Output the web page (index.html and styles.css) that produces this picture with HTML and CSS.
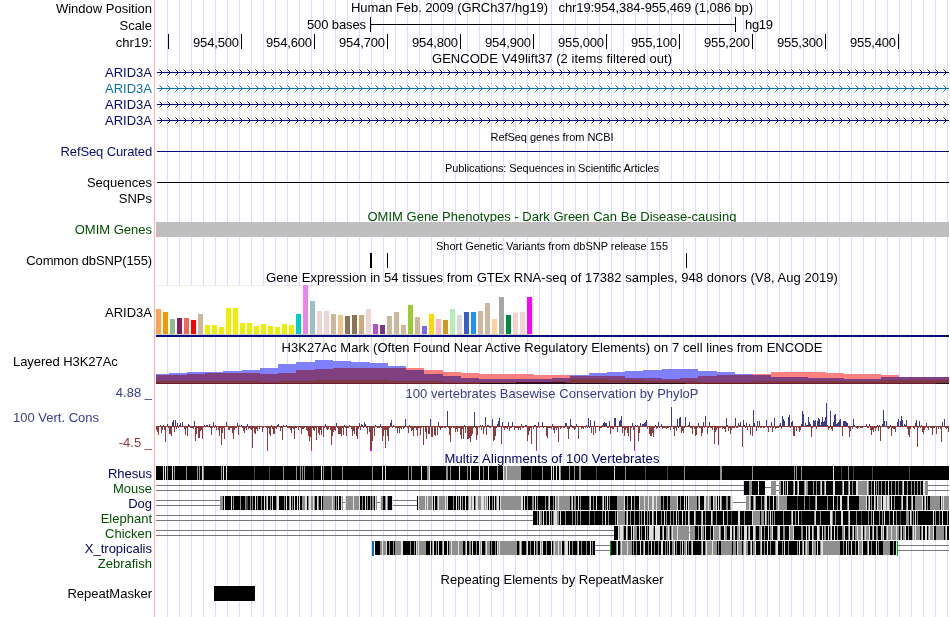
FILE: index.html
```
<!DOCTYPE html>
<html lang="en">
<head>
<meta charset="utf-8">
<title>Genome Browser hg19 chr19:954,384-955,469</title>
<link rel="stylesheet" href="styles.css">
</head>
<body>
<main class="browser">
  <div class="row h16"><div class="label low">Window Position</div><div class="title pre"><span style="--w:402">Human Feb. 2009 (GRCh37/hg19)   chr19:954,384-955,469 (1,086 bp)</span></div></div>
  <div class="row h17"><div class="label low">Scale</div><svg class="track" id="scale" viewBox="155 0 795 17"></svg></div>
  <div class="row h17"><div class="label low">chr19:</div><svg class="track" id="ruler" viewBox="155 0 795 17"></svg></div>
  <div class="row h14"><div class="label"></div><div class="title down"><span style="--w:240">GENCODE V49lift37 (2 items filtered out)</span></div></div>
  <div class="row h16 navy"><div class="label low">ARID3A</div><svg class="track gene" viewBox="155 0 795 16"></svg></div>
  <div class="row h16 sky"><div class="label low">ARID3A</div><svg class="track gene" viewBox="155 0 795 16"></svg></div>
  <div class="row h16 navy"><div class="label low">ARID3A</div><svg class="track gene" viewBox="155 0 795 16"></svg></div>
  <div class="row h16 navy"><div class="label low">ARID3A</div><svg class="track gene" viewBox="155 0 795 16"></svg></div>
  <div class="row h16"><div class="label"></div><div class="title small down"><span style="--w:123">RefSeq genes from NCBI</span></div></div>
  <div class="row h15 navy"><div class="label tight">RefSeq Curated</div><svg class="track" viewBox="155 0 795 15"><path class="solid" d="M157 7h792v1h-792z"/></svg></div>
  <div class="row h16"><div class="label"></div><div class="title small down"><span style="--w:214">Publications: Sequences in Scientific Articles</span></div></div>
  <div class="row h15"><div class="label">Sequences</div><svg class="track" viewBox="155 0 795 15"><path class="solid" d="M157 7h792v1h-792z"/></svg></div>
  <div class="row h16"><div class="label low">SNPs</div></div>
  <div class="row h16 green"><div class="label"></div><div class="title lower"><span style="--w:369">OMIM Gene Phenotypes - Dark Green Can Be Disease-causing</span></div></div>
  <div class="row h15 green"><div class="label">OMIM Genes</div><svg class="track" viewBox="155 0 795 15"><path class="omim" d="M156 0h793v15h-793z"/></svg></div>
  <div class="row h16"><div class="label"></div><div class="title small down"><span style="--w:232">Short Genetic Variants from dbSNP release 155</span></div></div>
  <div class="row h15"><div class="label tight">Common dbSNP(155)</div><svg class="track" viewBox="155 0 795 15"><path class="solid" d="M370 0h2v15h-2zM387 0h1v15h-1zM686 0h1v15h-1z"/></svg></div>
  <div class="row h17"><div class="label"></div><div class="title down"><span style="--w:572">Gene Expression in 54 tissues from GTEx RNA-seq of 17382 samples, 948 donors (V8, Aug 2019)</span></div></div>
  <div class="row h53"><div class="label low">ARID3A</div><svg class="track" id="gtex" viewBox="155 0 795 53"></svg></div>
  <div class="row h17"><div class="label"></div><div class="title down"><span style="--w:541">H3K27Ac Mark (Often Found Near Active Regulatory Elements) on 7 cell lines from ENCODE</span></div></div>
  <div class="row h30"><div class="label wide">Layered H3K27Ac</div><svg class="track" id="h3k" viewBox="155 355 795 30"></svg></div>
  <div class="row h16 indigo"><div class="label">4.88 _</div><div class="title down"><span style="--w:293">100 vertebrates Basewise Conservation by PhyloP</span></div></div>
  <div class="row h51"><div class="label stack"><span class="indigo first">100 Vert. Cons</span><span class="maroon">-4.5 _</span></div><svg class="track" id="phylop" viewBox="155 401 795 51"></svg></div>
  <div class="row h14 deep"><div class="label"></div><div class="title"><span style="--w:215">Multiz Alignments of 100 Vertebrates</span></div></div>
  <div class="row h15 deep"><div class="label">Rhesus</div><svg class="track align" data-name="rhesus" viewBox="155 0 795 15"></svg></div>
  <div class="row h15 green"><div class="label">Mouse</div><svg class="track align" data-name="mouse" viewBox="155 0 795 15"></svg></div>
  <div class="row h15 deep"><div class="label">Dog</div><svg class="track align" data-name="dog" viewBox="155 0 795 15"></svg></div>
  <div class="row h15 green"><div class="label">Elephant</div><svg class="track align" data-name="elephant" viewBox="155 0 795 15"></svg></div>
  <div class="row h15 green"><div class="label">Chicken</div><svg class="track align" data-name="chicken" viewBox="155 0 795 15"></svg></div>
  <div class="row h15 deep"><div class="label">X_tropicalis</div><svg class="track align" data-name="frog" viewBox="155 0 795 15"></svg></div>
  <div class="row h15 green"><div class="label">Zebrafish</div></div>
  <div class="row h15"><div class="label"></div><div class="title down"><span style="--w:223">Repeating Elements by RepeatMasker</span></div></div>
  <div class="row h15"><div class="label">RepeatMasker</div><svg class="track" viewBox="155 0 795 15"><path class="solid" d="M214 0h41v15h-41z"/></svg></div>
</main>
<script src="tracks.js"></script>
</body>
</html>
```
FILE: styles.css
```
* { box-sizing: border-box; }
body { margin: 0; background: #fff; }
.browser {
  width: 950px; height: 617px; overflow: hidden;
  font: 13px/14px "Liberation Sans", Arial, sans-serif; color: #000;
  background:
    linear-gradient(#ffb4b4, #ffb4b4) 154px 0 / 1px 100% no-repeat,
    repeating-linear-gradient(90deg, #dcdcff 0 1px, transparent 1px 12px) 167px 0 / 783px 100% no-repeat;
}
.row { display: grid; grid-template-columns: 152px 795px; column-gap: 3px; }
.h14 { height: 14px; } .h15 { height: 15px; } .h16 { height: 16px; } .h17 { height: 17px; }
.h30 { height: 30px; } .h51 { height: 51px; } .h53 { height: 53px; }
.label { display: flex; align-items: center; justify-content: flex-end; white-space: nowrap; }
.low { padding-top: 2px; }
.tight { letter-spacing: -.13px; }
.wide { justify-content: flex-start; align-items: flex-start; padding-left: 13px; letter-spacing: -.05px; }
.stack { flex-direction: column; align-items: flex-end; justify-content: space-between; padding: 10px 0 2px; }
.first { align-self: flex-start; padding-left: 13px; }
.title { display: flex; align-items: center; justify-content: center; white-space: nowrap; padding-right: 1px; }
.pre { white-space: pre; }
.down { padding-top: 2px; }
.lower { padding-top: 4px; }
.small { font-size: 11px; }
.track { display: block; width: 795px; height: 100%; shape-rendering: crispEdges; overflow: hidden; }
.track text { fill: #000; text-anchor: end; }
.navy { color: #0c0c78; }
.sky { color: #0f70b0; }
.green { color: #005000; }
.deep { color: #000064; }
.indigo { color: #3c3c8c; }
.maroon { color: #8c3c3c; }
.solid { fill: currentColor; }
.omim { fill: #bebebe; }
.arrows { fill: none; stroke: currentColor; stroke-width: 1; shape-rendering: auto; }
.marks { isolation: isolate; }
.marks path { mix-blend-mode: multiply; }
```
FILE: tracks.js
```
const rect = (x, y, w, h, c) => `<rect x="${x}" y="${y}" width="${w}" height="${h}" fill="${c}"/>`;
const byId = id => document.getElementById(id);

/* Fit each heading to its nominal width. */
document.querySelectorAll('.title span').forEach(s => {
  const want = +s.style.getPropertyValue('--w');
  s.style.letterSpacing = (want - s.getBoundingClientRect().width) / s.textContent.length + 'px';
});

byId('scale').innerHTML = rect(370, 1, 1, 15, '#000') + rect(735, 1, 1, 15, '#000') + rect(370, 8, 365, 1, '#000') +
  '<text x="366" y="13" textLength="59">500 bases</text><text x="773" y="13" textLength="28">hg19</text>';

const names = ['', '954,500', '954,600', '954,700', '954,800', '954,900', '955,000', '955,100', '955,200', '955,300', '955,400'];
byId('ruler').innerHTML = names.map((n, i) => {
  const x = 168 + i * 73;
  return rect(x, 1, 1, 15, '#000') + (n ? `<text x="${x - 2}" y="14" textLength="46">${n}</text>` : '');
}).join('');

document.querySelectorAll('.gene').forEach(g => {
  let d = '';
  for (let x = 162; x < 950; x += 8) d += `M${x - 2.5} 5.5l3 3l-3 3`;
  g.innerHTML = rect(157, 8, 792, 1, 'currentColor') + `<path class="arrows" d="${d}"/>`;
});

const tops = [87,96,117,114,114,120,102,135,135,141,84,84,129,129,138,132,138,141,132,135,102,15,63,93,93,102,105,108,105,105,87,132,135,108,96,135,75,111,138,102,117,120,87,105,96,96,93,69,117,51,105,99,96,51];
const tissue = ('ffa54f ee9a00 8fbc8f 8b1c62 ee6a50 ff0000 cdb79e ' + 'eeee00 '.repeat(13) +
  '00cdcd ee82ee 9ac0cd eed5d2 eed5d2 cdb79e eec591 8b7355 8b7355 cdaa7d eed5d2 b452cd 7a378b cdb79e cdb79e cdb79e 9acd32 cdb79e 7a67ee ffd700 ffb6c1 cd9b1d b4eeb4 d9d9d9 3a5fcd 1e90ff cdb79e cdb79e ffd39b a6a6a6 008b45 eed5d2 eed5d2 ff00ff').split(' ');
byId('gtex').innerHTML = rect(156, 0, 378, 50, '#eee') + rect(156, 1, 377, 48, '#fff') + rect(156, 49, 377, 1, '#ccc') +
  tops.map((t, i) => rect(156 + i * 7, t / 3 - 5, 5, (162 - t) / 3, '#' + tissue[i])).join('') +
  rect(156, 50, 793, 2, '#0c0c78');

const area = (steps, fill) => {
  let d = `M${steps[0]} 384`;
  for (let i = 0; i < steps.length; i += 2) d += `H${steps[i]}V${steps[i + 1]}`;
  return `<path fill="${fill}" d="${d}H949V384z"/>`;
};
byId('h3k').innerHTML = '<g class="marks">' +
  area([156,374,169,373,187,372,223,371,242,370,260,368,278,364,296,362,315,360,333,361,351,362,370,363,388,366,406,370,424,374,443,376,461,378,479,379,534,379,552,378,570,375,589,373,607,372,625,371,643,370,662,369,698,371,717,372,735,374,753,375,771,377,808,378,844,379,881,377], '#8080ff') +
  area([156,375,187,374,205,373,260,374,278,373,296,370,315,369,333,368,424,370,443,372,461,373,479,374,534,375,570,376,625,378,662,379,680,378,698,376,717,375,753,374,771,372,826,373,844,374,881,375,899,377], '#ff8080') + '</g>' +
  area([156,381,260,382,278,381,315,380,388,381,443,382,552,381,570,379,607,380,643,381,698,382,753,381,881,380], '#803840') +
  rect(156, 383, 793, 1, '#701c30') + rect(480, 383, 205, 1, '#280818') + rect(936, 383, 13, 1, '#281818') + rect(516, 382, 50, 1, '#401028');

/* Conservation scores: a position and a score (a bar's signed height), per base column. */
const peaks = {};
const put = (origin, s) => s.trim().split(/\s+/).forEach(p => {
  const [x, y] = p.split(',').map(Number);
  peaks[origin + Math.floor(x / 3)] = Math.round((124 - y) / 3);
});
put(150, '19,135 22,141 25,150 31,120 34,144 43,135 46,171 52,117 55,129 58,147 61,147 64,153 67,111 70,105 73,141 76,105 82,114 88,120 91,114 97,111 103,132 106,150 112,153 115,117 127,129 133,108 136,168 139,147 145,159 148,159 151,138 157,162 163,120 178,117 184,150 190,111 199,135 205,135 208,153 214,180 217,144 223,162 229,111 235,135 238,135 241,129 247,144 250,162 262,114 265,150 280,138 283,144 292,117 307,189 313,144 316,147 322,138 328,132 337,141 352,193 358,147 361,153 370,147 373,147 382,120 385,117 391,138 397,165 409,120 424,144 433,162 445,135 454,147 472,138 475,153 478,168 481,156 484,193 493,138 499,165 505,144 508,150 514,150 520,156 526,117 529,132 535,132 544,180 547,153 550,141 556,138 559,114 565,147 568,147 571,147 574,153 580,150 583,120 589,153 598,120 604,132 607,153 610,138 613,147 619,153 622,162 628,114 634,117 637,120 643,111 646,117 652,147 658,141 661,193 664,193 667,168 673,153 691,117 697,168 700,153 706,189 712,153 715,168 721,114 724,105 730,120 742,144 748,144 754,132 766,102 775,144 778,120 784,138 790,153 802,153');
put(415, '7,153 16,150 25,180 31,141 34,162 40,147 43,147 46,102 49,156 52,156 58,150 61,153 67,150 70,111 76,135 97,78 103,150 106,171 121,141 127,141 136,150 139,162 145,162 151,144 157,162 160,162 163,159 166,171 169,153 172,147 178,81 184,165 187,150 205,147 211,96 214,150 232,102 235,168 238,165 241,153 247,117 250,108 253,99 259,177 262,111 268,135 280,111 283,138 292,111 310,135 319,117 322,129 337,168 340,150 343,138 349,177 355,132 364,193 370,111 382,111 394,153 397,159 412,117 418,144 430,171 436,132 451,114 454,114 460,162 466,102 478,135 484,117 490,162 505,132 520,99 526,105 529,144 535,150 538,108 541,144 553,138 565,114 568,111 571,114 574,114 583,108 586,147 598,99 601,99 607,141 613,108 616,105 619,93 622,144 628,153 637,144 640,153 646,168 652,114 658,193 670,168 673,144 676,114 682,117 685,117 688,114 691,111 694,105 703,147 706,153 709,153 712,144 715,156 724,132 730,111 739,117 742,132 754,132 769,66 778,153 784,138 787,102 793,99 802,138');
put(680, '1,96 4,144 10,144 16,96 28,111 37,147 43,132 46,153 49,150 55,114 64,153 67,144 70,111 76,93 82,147 88,111 97,135 103,177 106,141 115,180 136,141 139,99 145,138 151,147 166,99 175,114 181,111 187,186 190,105 199,114 208,117 211,150 217,153 220,75 223,114 229,138 232,108 238,108 259,105 265,141 274,111 277,141 283,99 301,114 307,93 310,102 313,108 325,96 328,90 334,111 337,108 340,153 343,153 349,138 358,141 364,117 367,78 370,87 376,114 385,96 388,111 391,117 394,156 400,105 403,108 406,105 409,132 412,108 415,99 418,102 424,111 427,96 430,111 433,108 436,96 439,54 445,135 451,78 457,138 460,111 463,90 466,87 469,117 472,114 475,111 478,105 481,102 487,153 490,108 493,108 496,108 499,111 502,114 508,156 511,138 517,132 520,102 532,132 541,129 559,117 568,117 571,135 574,150 580,141 586,138 595,138 601,168 607,117 610,75 613,108 619,108 628,129 634,153 646,141 652,111 655,102 661,108 664,93 667,105 673,117 679,105 685,150 688,156 703,132 706,114 709,105 712,186 718,108 727,141 730,147 739,114 754,129 757,150 769,147 775,132 784,171 787,111 793,102 799,132 805,141');
let cons = '';
for (let x = 156; x < 949; x++) {
  const n = (x * 37 + (x * x) % 29) % 11;
  const v = peaks[x] ?? (n < 4 ? -1 : n < 7 ? -2 - n % 3 : n === 8 ? 1 : 0);
  cons += rect(x, 426, 1, 1, '#8c3c3c');
  if (v > 0) cons += rect(x, 426 - v, 1, v, '#3c3c8c');
  if (v < 0) cons += rect(x, 427, 1, -v - 0.5 | 0 || 1, '#8c3c3c');
  if (v <= -23) cons += rect(x, 449, 1, 2, '#f0f');
}
byId('phylop').innerHTML = cons;

/* Alignment quality: block starts, then runs of tone + length (k dark, d charcoal, g grey, l light, w open).
   In a cycling track a run list repeats up to the next start. */
const tone = { k: '#000', d: '#444', g: '#8f8f8f', l: '#e0e0e0', w: '#fff' };
const align = {
  rhesus: { once: true, blocks: [[156, 949]], runs: '163 l1k1l1k1g1 172 l1k1g1 186 g1 197 g1k1g1k2l1g1 221 g1k1l1k2l1 254 d1 269 d1 283 g1 296 g1k3g1k1g1k1g1 313 d1 321 l1k1g1 331 g1 342 g1 372 g1 382 l1k2l1 408 g1k2g1 421 l1k5g2l1 446 g2k2g1 459 l1 467 g1k2l1 479 l1k3g1k4l1k8g1 503 l1g2l1g14 531 d1 542 g1 551 l1k1l1k2l1k2l1g1 569 g1k4g1k4g2 596 d1 614 l1 625 g1 645 d1 667 d1 684 g1 720 g2 752 g1 794 g1k1g1k4g1 833 l1 841 d1 848 g1k4d1 872 d1 909 d1' },
  mouse: { double: [[156, 744], [776, 779], [928, 949]], single: [[765, 771]], blocks: [[744, 765], [771, 776], [779, 928]], runs: '744 k5g3k6l1k6 771 g5 779 g2k2l1k1g1k1l1k5g1l1k2g1l1k5g1l1 810 k3g1k2g1k3g1l1k2g1l1k7l2k7g1l1k4g1l1k2g1k3l2k8g1l1g1 856 l2g9l1g1k2g1k2l1k1g1k1g1k2g1k3g1k2l1k2g1k3g1k2g1k3g1l1k3g1k3g1k2g1k2g1k2g1k2' },
  dog: { double: [[156, 220], [393, 417]], single: [[343, 345], [377, 380], [733, 746]], blocks: [[220, 343], [344, 377], [380, 393], [417, 733], [746, 949]], runs: '220 g3k1l1k6l1k1g1k6g1k4g1d2k2g1k1g1k2l1k1g1k3g1k2l1k1g1l1k2g1k1l1k3g1l2k5g1k1l1k2g1l1k1g1k1l1k2l1k1l1k2g1k1l1k2l1k1 302 g3l2k1g1l2g2l1g1k2l1g1k2l1k1g9l1g2k1g1k1l1k2l1g1l1g2 344 w1l1g7l1g5l1k2g1k2l1k1g1k2g1k1g2k1l1g2l2 380 l1g2k2g1l1g1k4 417 k1l1g6l1g1l1g4l1k1l1k2g1l1g6l1g1l1k5g1k2l1k1g1k1l1k1g1k2l1k2g1l2g1l2k1g1l2g3l3g1l1g1l1k1l1k2g1k1l1k1g1l2 506 g15l2k1l1k2g1k4 533 g1k1l1k1g1k7g1k2g1l1k3g1k1l1g2l1g11k1g1l1k1g2k2l1k1g1k8g1l1k2g1k2l1k5g1l1k1 617 g7l1k2g1k3l1k2g1k4l1g4l1g3l1g3l2g2l1g4k2g1k3g1k2 684 l1k1l1k1l1g8k1g1l1k4l2g2l1g2k2l1g2l1k1l1k1l1g1k4g2k2g1l2 746 g3l1g1k2g1l1g1k5g1k2g1l2k2g1k3l1k2g2l1g5 787 k10d1k6g1k4d1k5g1l1k10g1k5l1k3g1k2l2k5g1l1k4 859 g7l1k1g1l1k1g1k2l1g1k1l1g3l1k1l3g1l2g1k1l1k2g1k6g1l1k3g1l1k3g1l1k2 930 g10k1l1g1l1g5' },
  elephant: { double: [[156, 533]], blocks: [[533, 949]], runs: '533 k4g1k1l1g2k1l1k2g1k2l1k1g1k1g1l3g2k1l1k4g1k6g1k2g1k1g1k2g1k8g1k4d1k7g1k2l1k2g1k2 618 g7k1g1l1k2g1k3g1k4g1k1g1k2l1k2g1k1g1k2l1g1k2l1k4g1k2l1k1g1k3g1k2g1k2l1k1g1k3l1k2g1k2l1g1k4l1g1k5g1l1k2g1k5l1g1k3g1k6l1k3g1k3d1k6l2k4g1k7l1 761 g3k1l1g1k1g1k1l1k1g1k1g1k8g1k7g1l1k2g1k2l1k2d1k12g1l1k4g1k9l2g1k2g1k5l2k5g1l1k6g1k4d1k6g1k2g1k1l1k5g1k2g1k1l1k4g1k3l1k2g1k3d1k5 919 k14l1k1g1k3g1k2l1k4g1k2' },
  chicken: { double: [[156, 614]], single: [[689, 690]], blocks: [[614, 689], [690, 949]], runs: '614 k4l1g1l3g1k2l1g1k3l1k1l1g3k2l1k1g1k3l1k1g1k1l4g1k1l5k2g1l1k2g2l1g1k1g1l1g4l1g6l1k1g1l1g9 680 g9 690 g5k3g1k2l1g2k1l1k4g1k2l1g5l1g1k3l1g2k3l2k1g1l1k2g2l1k1g1k2l3k1g1l1k3l2g1k3g2l1k2g1k3l1k1g2l1k4g1l2k3g2k4l1g3l1k7g2k3l1k1g1l1k2l1g1k3l2g1k2l1k1g2k2l1k1g1l1k2l1k2g1k4g2l1k3g1l1k2g1l1k1g2l1g4l1g2l2g1k1l1k2g1k2 861 l2k1g1l1g3l1k2g1l1k2g2k3l1g1l1k2g1l1g3l1g4l1g2k1g1l1k1g2l1k2g1k3g1l1g1l1g4k1g1l1k2 936 g8k1g1l1k2' },
  frog: { double: [[595, 610], [898, 949]], blocks: [[374, 595], [611, 898]], runs: '374 w1k5g2l1g3l1k2g1k3g1k1g6l2k7 410 g1k3g1k1l1g1l1g7k4l1k1g1l1k2g1k1l1k3g1l1k3l1k1g2l1g6l1g4k2g1l1k2g2k1l1k3g1k2l1g1l1k3g1l1g3k1 506 g11k2g1l1g1k4g1l1k2g1k3l1k1g2k2l1g1l1k3g1k4l1k1g1l2k3 555 g3l1g2l1k2g1l3k1l1k2g1k4g1l1k2g1k4g1k3l1k1g1k3 611 k5g1l1k2g1l1g5l1g4k1g1k2g1k3l1k2g1l1k3g1k2l1k2g1k3g1k2l2k2g1k1g1k1l1k2g2l1k1g1k3g1k1l1k1g2l1k1g1k2g1l1k3 721 g11k1g3k1l1g4k1g1l2g2k2g1l1k1g2l1k4g1l1k2g1k2l1k2g1k4g1l2k4g1k1l1k3g1k8g1k1l1k2g1l1k1g1l1g2k3l1g3k1l1k2g1l2 833 g7k3g1k2l1k1g1k2l1k3g1k2l1g3l1k4g1l1k2g1k4l1k1g1k4' }
};
document.querySelectorAll('.align').forEach(el => {
  const a = align[el.dataset.name];
  let out = '';
  (a.double || []).forEach(([s, e]) => { out += rect(s, 4, e - s, 1, '#777') + rect(s, 9, e - s, 1, '#777'); });
  a.blocks.forEach(([s, e]) => { out += rect(s, 0, e - s, 14, '#000'); });
  const fields = a.runs.split(' ');
  for (let i = 0; i < fields.length; i += 2) {
    let x = +fields[i];
    const block = a.blocks.find(b => x >= b[0] && x < b[1]);
    const limit = Math.min(block ? block[1] : 949, fields[i + 2] ? +fields[i + 2] : 949);
    const runs = [...fields[i + 1].matchAll(/([kdglw])(\d+)/g)];
    do {
      for (const [, t, n] of runs) {
        const w = Math.min(+n, limit - x);
        if (w > 0) out += rect(x, 0, w, 14, tone[t]);
        x += +n;
      }
    } while (!a.once && x < limit);
  }
  (a.single || []).forEach(([s, e]) => { out += rect(s, 0, e - s, 14, '#fff') + rect(s, 6, e - s, 1, '#777'); });
  if (el.dataset.name === 'frog') out += rect(372, 0, 2, 15, '#0070c8') + rect(610, 0, 1, 15, '#00a820') + rect(897, 0, 1, 15, '#00a820');
  el.innerHTML = out;
});
```
